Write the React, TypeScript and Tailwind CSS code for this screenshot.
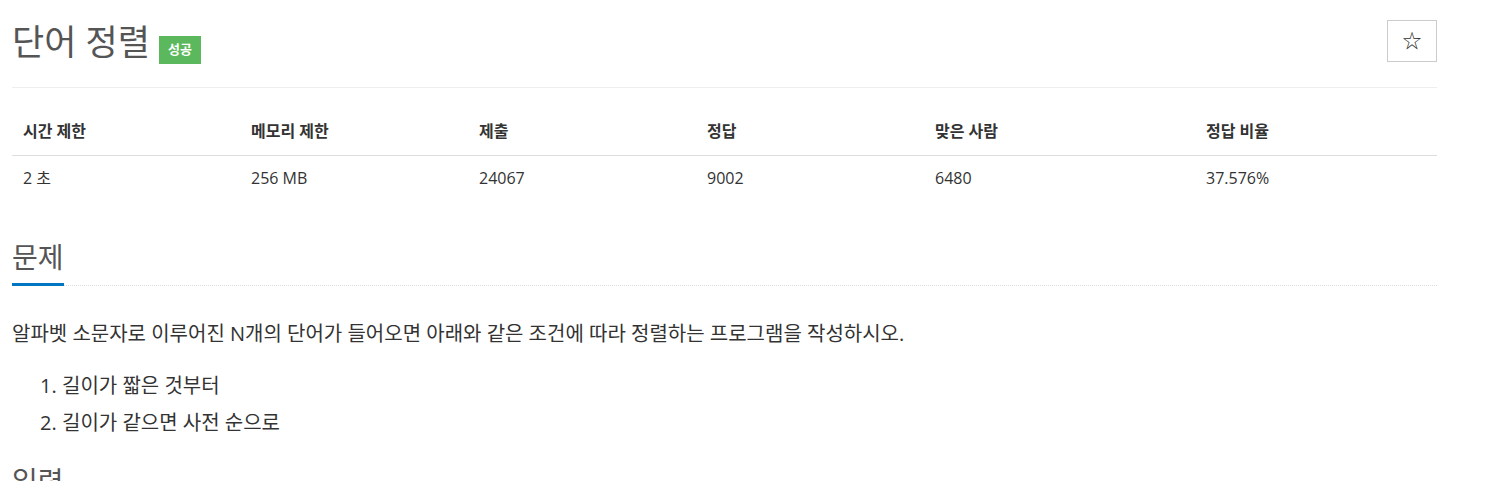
const font = "font-['Open_Sans','Noto_Sans_CJK_KR',sans-serif]"

export default function App() {
  const heads = ['시간 제한', '메모리 제한', '제출', '정답', '맞은 사람', '정답 비율']
  const vals = ['2 초', '256 MB', '24067', '9002', '6480', '37.576%']

  return (
    <div className={`${font} bg-white text-[#333] w-[1493px] h-[481px] overflow-hidden`}>
      <div className="w-[1425px] ml-3">
        {/* Title */}
        <div className="flex items-start justify-between pt-[20px] pb-[24px] border-b border-[#eee]">
          <div className="flex items-end gap-[9px] mt-[1px]">
            <h1 className="text-[35px] leading-[42px] text-[#555]">단어 정렬</h1>
            <span className="mb-[-1px] h-[28px] w-[42px] flex items-center justify-center bg-[#5cb85c] text-white text-[13px] font-bold">성공</span>
          </div>
          <button className="w-[50px] h-[42px] border border-[#ccc] flex items-center justify-center text-[19px] text-[#333]">☆</button>
        </div>

        {/* Info table */}
        <div className="mt-[32px] text-[16px]">
          <div className="grid grid-cols-[228px_228px_228px_228px_271px_1fr] border-b border-[#ddd] pb-[12px]">
            {heads.map((h) => (
              <div key={h} className="px-[11px] font-bold leading-[23px]">{h}</div>
            ))}
          </div>
          <div className="grid grid-cols-[228px_228px_228px_228px_271px_1fr] pt-[11px]">
            {vals.map((v) => (
              <div key={v} className="px-[11px] leading-[23px]">{v}</div>
            ))}
          </div>
        </div>

        {/* Problem */}
        <div className="mt-[49px] border-b border-dotted border-[#ddd]">
          <h2 className="inline-block text-[28px] leading-[36px] text-[#555] pb-[8px] border-b-[3px] border-[#0076c0] mb-[-1px]">문제</h2>
        </div>
        <p className="mt-[33px] text-[20px] leading-[30px]">
          알파벳 소문자로 이루어진 N개의 단어가 들어오면 아래와 같은 조건에 따라 정렬하는 프로그램을 작성하시오.
        </p>
        <ol className="list-decimal pl-[50px] mt-[18px] text-[20px] leading-[37px]">
          <li>길이가 짧은 것부터</li>
          <li>길이가 같으면 사전 순으로</li>
        </ol>
        <h2 className="mt-[22px] text-[28px] leading-[36px] text-[#555]">입력</h2>
      </div>
    </div>
  )
}
